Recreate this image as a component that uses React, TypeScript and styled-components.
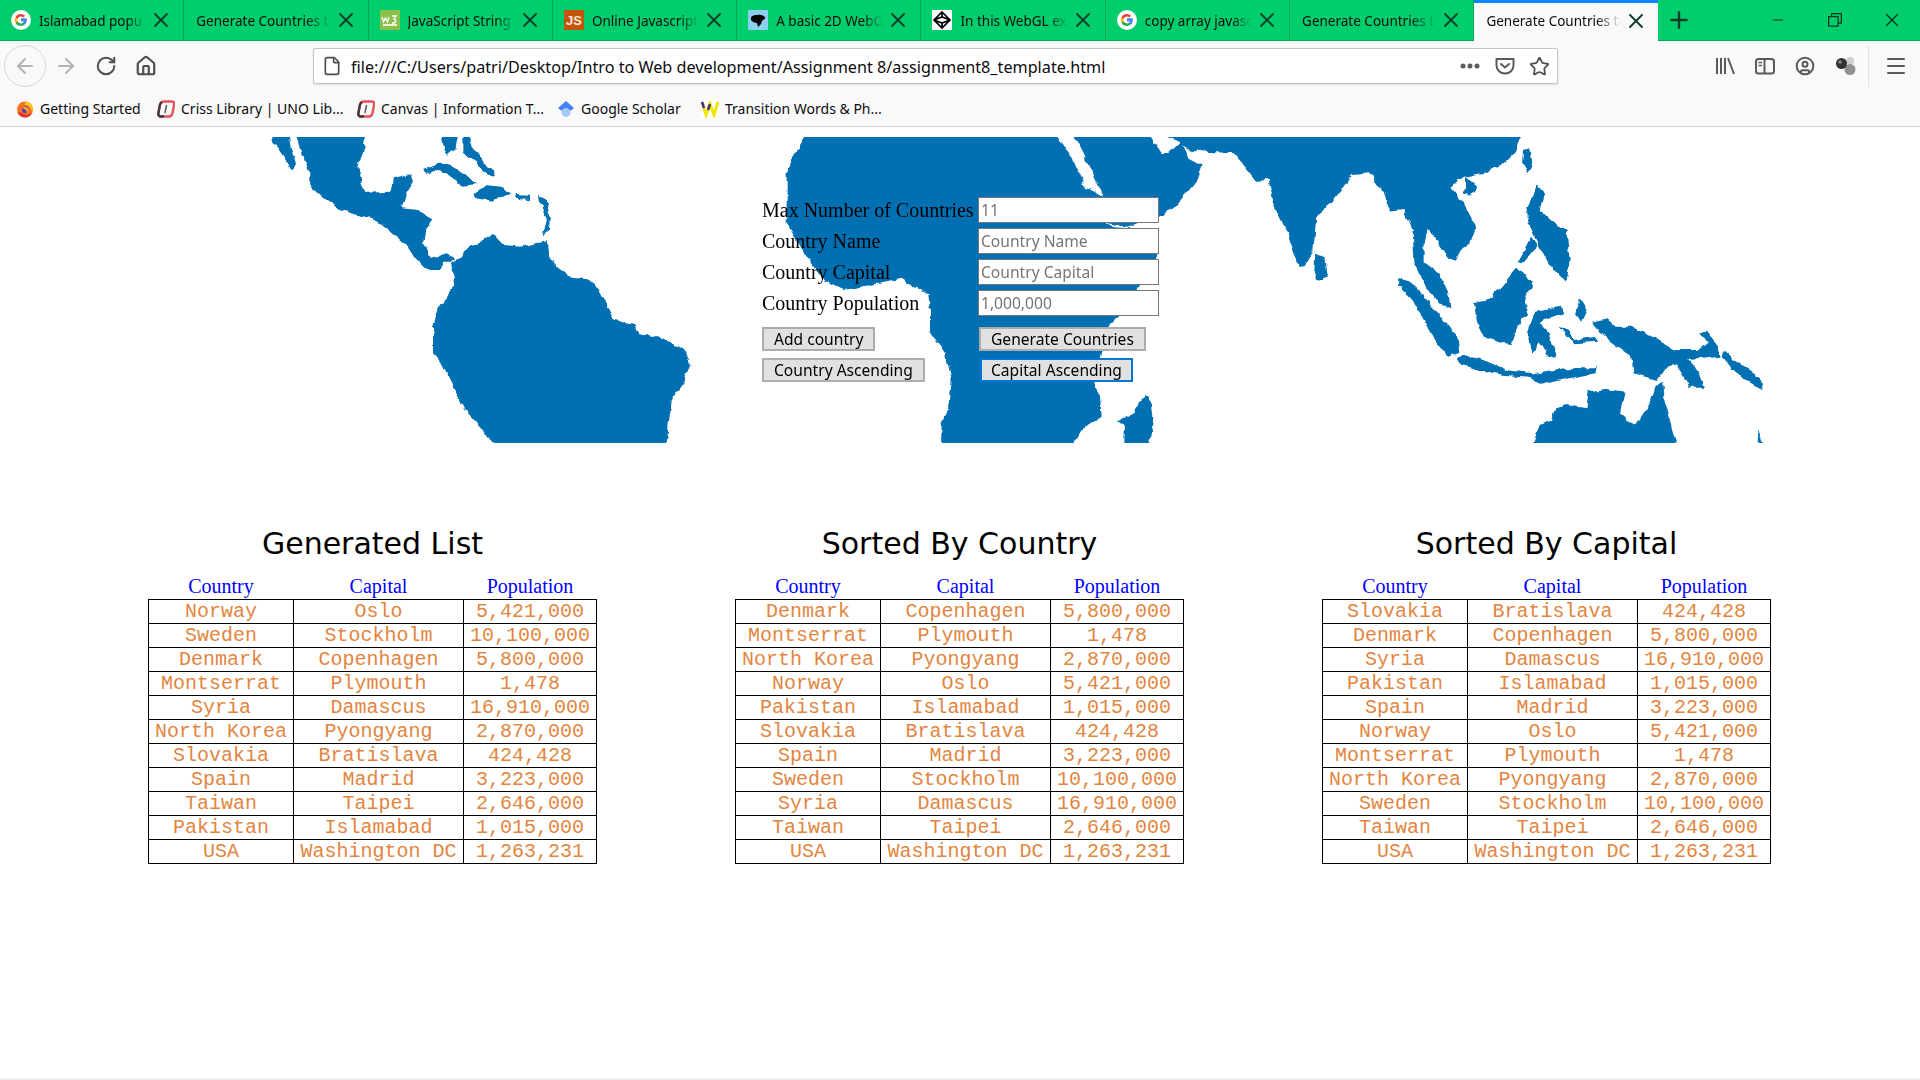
import React from 'react'
import styled, { createGlobalStyle } from 'styled-components'
import { ArrowLeft, ArrowRight, RotateCw, House, File, Star, Menu, CircleUser, Plus, Minus, X } from 'lucide-react'

const UI_FONT = `"Noto Sans", "Open Sans", sans-serif`

const GlobalStyle = createGlobalStyle`
  html, body {
    margin: 0;
    padding: 0;
    background: #fff;
    overflow: hidden;
  }
`

const Page = styled.div`
  display: flex;
  flex-direction: column;
  height: 100vh;
  font-family: ${UI_FONT};
`

/* browser chrome */
const TabStrip = styled.div`
  display: flex;
  height: 40px;
  background: #00cd6c;
  border-bottom: 1px solid #08a458;
  flex-shrink: 0;
`
const Tab = styled.div<{ active?: boolean }>`
  box-sizing: border-box;
  width: ${props => props.active ? '183.6px' : '184.3px'};
  height: ${props => props.active ? '41px' : '40px'};
  display: flex;
  align-items: center;
  padding: ${props => props.active ? '0 0 3px 11px' : '0 0 0 11px'};
  background: ${props => props.active ? '#f9f9fa' : 'transparent'};
  border-top: ${props => props.active ? '3px solid #0a84ff' : 'none'};
  border-right: ${props => props.active ? 'none' : '1px solid #08a458'};
  color: #0c0c0d;
`
const Favicon = styled.svg`
  width: 20px;
  height: 20px;
  margin-right: 8px;
  flex-shrink: 0;
`
const TabTitle = styled.span<{ plain?: boolean }>`
  flex: 1;
  min-width: 0;
  margin-left: ${props => props.plain ? '1px' : '0'};
  padding-top: 1px;
  font-size: 13.5px;
  white-space: nowrap;
  -webkit-mask-image: linear-gradient(to right, #000 82%, transparent 100%);
  mask-image: linear-gradient(to right, #000 82%, transparent 100%);
`
const TabClose = styled.div`
  width: 30px;
  margin-right: 7px;
  display: flex;
  justify-content: center;
  color: #123f2b;
`
const NewTab = styled.div`
  width: 42px;
  display: flex;
  align-items: center;
  justify-content: center;
  color: #0d3d27;
`
const WindowControls = styled.div`
  margin-left: auto;
  display: flex;
  align-items: center;
  height: 40px;
  color: #0d2f20;
`
const WindowButton = styled.div`
  width: 57px;
  display: flex;
  justify-content: center;
`
const Toolbar = styled.div`
  box-sizing: border-box;
  display: flex;
  align-items: center;
  height: 46px;
  padding-top: 4px;
  background: #f9f9fa;
  flex-shrink: 0;
`
const BackButton = styled.div`
  box-sizing: border-box;
  width: 42px;
  height: 42px;
  margin-left: 4px;
  border: 1px solid #d7d7d8;
  border-radius: 50%;
  display: flex;
  align-items: center;
  justify-content: center;
  color: #b4b4b6;
`
const NavButton = styled.div<{ dim?: boolean }>`
  width: 40px;
  display: flex;
  justify-content: center;
  color: ${props => props.dim ? '#b4b4b6' : '#4f4f50'};
`
const UrlBar = styled.div`
  box-sizing: border-box;
  width: 1245px;
  height: 36px;
  margin-left: 147px;
  padding: 0 0 0 8px;
  display: flex;
  align-items: center;
  background: #fff;
  border: 1px solid #c4c4c5;
  border-radius: 2px;
  box-shadow: 0 1px 2px rgba(0, 0, 0, .1);
  color: #4f4f50;
`
const UrlText = styled.span`
  flex: 1;
  margin-left: 9px;
  padding-top: 1px;
  font-size: 16.2px;
  color: #0c0c0d;
  white-space: nowrap;
`
const UrlAction = styled.div`
  width: 35px;
  display: flex;
  justify-content: center;
`
const ToolIcons = styled.div`
  display: flex;
  align-items: center;
  margin-left: 147px;
  color: #5a5a5c;
`
const ToolIcon = styled.div`
  width: 40px;
  display: flex;
  justify-content: center;
`
const ToolDivider = styled.div`
  width: 1px;
  height: 42px;
  margin: 0 7px 0 3px;
  background: #e1e1e2;
`
const Bookmarks = styled.div`
  box-sizing: border-box;
  display: flex;
  align-items: center;
  height: 40px;
  padding: 4px 0 0 16px;
  background: #f9f9fa;
  border-bottom: 1px solid #d3d3d4;
  flex-shrink: 0;
`
const Bookmark = styled.div<{ width: number }>`
  width: ${props => props.width}px;
  display: flex;
  align-items: center;
  font-size: 14px;
  color: #0c0c0d;
  white-space: nowrap;
`
const BookmarkIcon = styled.svg`
  width: 18px;
  height: 18px;
  margin-right: 6px;
  flex-shrink: 0;
`

/* page */
const Hero = styled.section`
  position: relative;
  height: 306px;
  margin-top: 10px;
  flex-shrink: 0;
`
const WorldMap = styled.svg`
  position: absolute;
  top: 0;
  left: 0;
  width: 1920px;
  height: 306px;
`
const Form = styled.div`
  position: relative;
  margin-left: 762px;
  padding-top: 60px;
`
const FieldRow = styled.div`
  display: grid;
  grid-template-columns: 216px 181px;
  align-items: center;
  height: 26px;
  margin-bottom: 5px;
`
const FieldLabel = styled.label`
  padding-top: 1px;
  font-family: "Liberation Serif", serif;
  font-size: 20px;
  color: #000;
  white-space: nowrap;
`
const FieldInput = styled.input`
  box-sizing: border-box;
  width: 181px;
  height: 26px;
  padding: 0 2px;
  background: #fff;
  border: 1px solid #767676;
  font-family: ${UI_FONT};
  font-size: 15.6px;
  &::placeholder {
    color: #757575;
    opacity: 1;
  }
`
const ButtonGroup = styled.div`
  margin-top: 11px;
`
const ButtonRow = styled.div`
  display: grid;
  grid-template-columns: 216px 181px;
  justify-items: start;
  height: 24px;
  margin-bottom: 7px;
`
const ActionButton = styled.button<{ focused?: boolean; inset?: number }>`
  box-sizing: border-box;
  height: 24px;
  margin-left: ${props => props.inset || 0}px;
  padding: 0 ${props => props.focused ? '9px' : '10px'};
  background: #e1e1e1;
  border: 2px solid ${props => props.focused ? '#0078d7' : '#adadad'};
  border-radius: 0;
  font-family: ${UI_FONT};
  font-size: 15.6px;
  line-height: 20px;
  color: #000;
`
const Lists = styled.main`
  display: flex;
  justify-content: center;
  gap: 138px;
  margin-top: 84px;
  padding-right: 1px;
`
const ListSection = styled.section`
  display: flex;
  flex-direction: column;
`
const ListTitle = styled.h2`
  margin: 0 0 14px;
  font-family: "DejaVu Sans", sans-serif;
  font-size: 30px;
  font-weight: 400;
  line-height: 34px;
  text-align: center;
  color: #000;
`
const Table = styled.table`
  border-collapse: collapse;
  width: 448px;
  table-layout: fixed;
`
const HeadCell = styled.th<{ width: number }>`
  width: ${props => props.width}px;
  height: 22px;
  padding: 0 0 2px;
  font-family: "Liberation Serif", serif;
  font-size: 20px;
  line-height: 22px;
  font-weight: 400;
  color: #0000ff;
`
const Cell = styled.td`
  height: 23px;
  padding: 0;
  border: 1px solid #000;
  font-family: "Liberation Mono", monospace;
  font-size: 20px;
  line-height: 23px;
  text-align: center;
  color: #e2853f;
  white-space: nowrap;
`
const BottomEdge = styled.div`
  margin-top: auto;
  height: 2px;
  background: #f0f0f0;
`

const X_ICON = <X size={24} strokeWidth={1.9} />

const GoogleIcon = () => (
  <Favicon viewBox="0 0 20 20">
    <circle cx="10" cy="10" r="10" fill="#fff" />
    <path d="M15.5 8.6H10v2.6h3.2c-.4 1.4-1.6 2.2-3.2 2.2a3.6 3.6 0 0 1-3.4-2.4l-2.2 1.7A6.2 6.2 0 0 0 10 16c3.300 0 5.800-2.400 5.500-7.400z" fill="#34a853" />
    <path d="M15.500 8.600H10v2.600h3.200a3 3 0 0 1-1.200 1.600l2.100 1.600c1.300-1.200 1.800-3.200 1.400-5.800z" fill="#4285f4" />
    <path d="M6.600 11A3.600 3.600 0 0 1 6.600 9L4.400 7.300a6.200 6.200 0 0 0 0 5.400z" fill="#fbbc05" />
    <path d="M10 6.600c.9 0 1.700.3 2.300.9l1.800-1.800A6 6 0 0 0 4.400 7.300L6.600 9A3.600 3.600 0 0 1 10 6.600z" fill="#ea4335" />
  </Favicon>
)
const W3Icon = () => (
  <Favicon viewBox="0 0 20 20">
    <rect width="20" height="20" fill="#8cc04a" />
    <path d="M2 7l1.500 5 2-4 2 4 1.500-5" fill="none" stroke="#fff" strokeWidth="1.300" />
    <path d="M12 6h4l-2 3c2 0 2.500 4-.5 4H12M3 15h14" fill="none" stroke="#fff" strokeWidth="1.300" />
  </Favicon>
)
const JsIcon = () => (
  <Favicon viewBox="0 0 20 20">
    <rect width="20" height="20" fill="#c4540d" />
    <text x="10" y="15" textAnchor="middle" fontFamily="Liberation Sans, sans-serif" fontWeight="700" fontSize="13" fill="#f6e8d8">JS</text>
  </Favicon>
)
const BlobIcon = () => (
  <Favicon viewBox="0 0 20 20">
    <rect width="20" height="20" fill="#8bd0f0" />
    <path d="M3 7c3-3 11-3 14 0 1 2-2 3-3 4l-1 3-3 3-1-4c-2 0-5-1-6-3z" fill="#050505" />
  </Favicon>
)
const CubeIcon = () => (
  <Favicon viewBox="0 0 20 20">
    <rect width="20" height="20" fill="#fff" />
    <path d="M10 2l8 8-8 8-8-8zM10 2v5M10 13v5M2 10l8-3 8 3M2 10l8 3 8-3" fill="none" stroke="#000" strokeWidth="1.700" />
  </Favicon>
)

const tabs = [
  { title: 'Islamabad popu', icon: <GoogleIcon /> },
  { title: 'Generate Countries t' },
  { title: 'JavaScript String', icon: <W3Icon /> },
  { title: 'Online Javascript', icon: <JsIcon /> },
  { title: 'A basic 2D WebG', icon: <BlobIcon /> },
  { title: 'In this WebGL ex', icon: <CubeIcon /> },
  { title: 'copy array javasc', icon: <GoogleIcon /> },
  { title: 'Generate Countries t' },
]

const FirefoxIcon = () => (
  <BookmarkIcon viewBox="0 0 18 18">
    <circle cx="9" cy="9.500" r="8" fill="#f7721f" />
    <path d="M9 1.500c4.400 0 8 3.600 8 8 0 1-.2 2-.6 2.900C15 7 12 5 9 5z" fill="#ffc21f" />
    <path d="M1.600 12.500C3 16 6 17.500 9 17.500c3.500 0 6-2 7-4.500-3 2-6 2-8 1S3.500 11.500 1.600 12.500z" fill="#e3342f" />
    <circle cx="9.500" cy="9.500" r="3.500" fill="#5a3cc4" />
    <path d="M6 8c2-2 6-1.500 7 1.500 0 2-1 3.500-3 4 2-2 0-4-4-5.500z" fill="#f9a11b" />
  </BookmarkIcon>
)
const ULogo = () => (
  <BookmarkIcon viewBox="0 0 18 18">
    <path d="M7 1.500h7.500c2 0 3 1 2.600 3L15.500 13c-.4 2-1.500 3.500-3.500 3.500H4c-2 0-3-1.500-2.600-3.500L3 4.500C3.400 2.500 5 1.500 7 1.500z" fill="none" stroke="#e8505b" strokeWidth="2.400" />
    <path d="M5 2.200C3.800 2.800 3.300 3.500 3 4.500L1.400 13c-.4 2 .6 3.500 2.600 3.500h3" fill="none" stroke="#3d3d40" strokeWidth="2.400" />
    <path d="M9.500 5L8 13" stroke="#55555a" strokeWidth="1.400" />
  </BookmarkIcon>
)
const ScholarIcon = () => (
  <BookmarkIcon viewBox="0 0 18 18">
    <path d="M9 1L1 8h16z" fill="#4285f4" />
    <path d="M1 8h16l-8 6z" fill="#3b78e7" />
    <circle cx="9" cy="12.500" r="4.500" fill="#a9c8fa" />
  </BookmarkIcon>
)
const WIcon = () => (
  <BookmarkIcon viewBox="0 0 18 18">
    <rect width="18" height="18" fill="#fff" />
    <path d="M1 2l4 13 4-11 4 11 4-13" fill="none" stroke="#f2e600" strokeWidth="3" />
    <path d="M1 2l2 6M9 4l-2 6" fill="none" stroke="#3a2e8c" strokeWidth="2.400" />
  </BookmarkIcon>
)

const PocketGlyph = () => (
  <svg width="20" height="20" viewBox="0 0 20 20" fill="none" stroke="#5a5a5c" strokeWidth="2">
    <path d="M1.500 3h17v6.500a8.500 8 0 0 1-17 0z" strokeLinejoin="round" />
    <path d="M6 8l4 3.500L14 8" strokeLinecap="round" />
  </svg>
)
const LibraryGlyph = () => (
  <svg width="20" height="20" viewBox="0 0 20 20" fill="none" stroke="#5a5a5c" strokeWidth="2">
    <path d="M2 2v16M6 2v16M10 2v16M13 2l6 16" />
  </svg>
)
const SidebarGlyph = () => (
  <svg width="20" height="20" viewBox="0 0 20 20" fill="none" stroke="#5a5a5c" strokeWidth="2">
    <rect x="1" y="3" width="18" height="14.500" rx="2.500" />
    <path d="M9.500 3v14.500" />
    <path d="M3.500 6.500h3.500M3.500 9.500h3.500" strokeWidth="1.400" />
  </svg>
)
const ExtensionGlyph = () => (
  <svg width="22" height="22" viewBox="0 0 22 22">
    <circle cx="16" cy="6" r="4" fill="#cfcfd0" />
    <circle cx="16" cy="14.500" r="5.500" fill="#909092" />
    <circle cx="7.500" cy="8.500" r="5.500" fill="#333335" />
    <circle cx="6" cy="7" r="1.800" fill="#8a8a8c" />
  </svg>
)
const RestoreGlyph = () => (
  <svg width="14" height="14" viewBox="0 0 14 14" fill="none" stroke="#0d2f20" strokeWidth="1.200">
    <rect x=".6" y="3.600" width="9.500" height="9.500" />
    <path d="M3.600 3.600V.6h9.800v9.500h-3.300" />
  </svg>
)

const LEFT_LAND = [
  '45,0 85,0 92,60 103,100 92,115 80,90 65,60 50,35',
  '100,0 258,0 255,60 243,110 250,160 262,188 315,185 320,145 365,130 368,150 350,190 340,235 375,240 408,265 395,300 390,340 405,385 440,370 462,385 450,395 430,395 428,420 405,420 385,400 365,375 350,345 300,290 275,265 240,255 205,240 165,205 135,170 135,130 115,70',
  '428,0 468,0 460,55 442,78 435,60',
  '478,0 495,0 492,40 510,70 525,100 550,125 548,140 525,125 505,95 478,70',
  '388,120 430,98 455,115 490,140 510,165 475,170 445,135 415,120 392,130',
  '505,190 525,165 565,170 585,195 550,205 540,215 510,205',
  '595,195 625,197 625,210 597,206',
  '645,195 665,210 672,250 670,300 655,320 665,270 655,225 647,215',
  '470,385 490,350 525,335 545,310 570,345 605,350 625,345 665,330 668,380 690,410 720,440 755,445 780,475 800,525 815,570 860,585 875,610 920,625 975,660 985,700 970,760 945,810 938,880 932,960 558,960 520,900 480,840 460,780 430,700 410,670 410,590 420,540 450,490 458,440 448,400',
]
const MIDDLE_LAND = [
  '150,0 880,0 935,80 975,170 1030,200 1020,270 1060,292 1195,300 1195,375 1140,465 1075,560 1045,590 1030,630 1005,770 1020,800 1025,860 965,900 930,960 543,960 545,880 570,810 575,750 555,670 510,600 510,540 505,490 465,475 420,445 330,465 250,480 190,450 140,380 110,330 80,280 80,130 100,80',
  '935,0 1155,0 1205,72 1225,72 1265,32 1285,85 1325,105 1305,160 1275,195 1240,235 1195,262 1100,290 1040,280 1030,195 1000,130',
  '1160,798 1175,820 1180,860 1165,960 1092,960 1095,890 1070,875 1120,850 1135,815',
]
const RIGHT_LAND = [
  '115,0 945,0 930,65 900,105 860,128 835,135 800,145 788,175 815,220 842,290 830,340 805,365 795,392 783,385 760,340 732,295 725,340 725,395 760,430 780,490 785,535 765,525 730,470 705,405 700,300 680,240 650,245 635,190 605,130 565,135 520,215 485,255 478,360 460,405 445,408 420,310 390,225 378,150 350,152 325,110 300,70 240,65 195,58 178,32',
  '950,60 965,55 968,100 958,130 948,100',
  '820,140 845,170 830,200 815,190 820,165',
  '980,165 995,190 985,240 1010,270 1045,305 1052,390 1045,455 1030,440 1005,400 985,350 960,280 955,230 970,190',
  '965,320 980,345 945,405 935,395 950,360',
  '480,370 505,385 510,440 490,452 478,430',
  '670,445 695,455 720,490 770,570 800,620 805,665 780,680 745,620 700,510 670,470',
  '795,685 815,675 860,690 910,720 970,730 1040,715 1110,715 1115,700 1110,730 1050,745 985,765 960,740 905,735 850,720 810,705',
  '935,415 970,455 950,510 960,550 935,590 920,645 900,640 860,620 845,580 838,520 870,510 900,470',
  '975,545 1035,530 1040,550 1000,565 985,580 1005,610 1025,685 1000,675 985,640 970,670 958,610 965,580',
  '1030,590 1050,600 1060,630 1110,620 1118,635 1060,640 1045,620',
  '1075,505 1090,540 1078,575 1065,550',
  '1105,575 1135,565 1155,590 1190,590 1240,620 1290,660 1340,660 1360,640 1345,610 1360,605 1385,650 1390,680 1320,690 1340,725 1355,770 1320,770 1290,700 1270,710 1250,750 1195,730 1190,680 1160,650 1120,610',
  '1400,660 1420,690 1480,745 1485,780 1440,745 1415,715 1395,680',
  '965,960 985,885 1010,870 1020,835 1045,825 1090,835 1095,780 1115,790 1125,775 1175,785 1165,850 1195,885 1225,840 1245,770 1262,755 1265,820 1280,890 1295,960',
  '1475,900 1490,960 1472,960',
]

// the coastlines are rough in the picture, the filter frays the straight polygon edges
const Map = () => (
  <WorldMap viewBox="0 137 1920 306" fill="#006fb3">
    <defs>
      <filter id="coast" filterUnits="userSpaceOnUse" x="0" y="100" width="1920" height="380">
        <feTurbulence type="fractalNoise" baseFrequency="0.11" numOctaves="2" seed="4" result="noise" />
        <feDisplacementMap in="SourceGraphic" in2="noise" scale="6" xChannelSelector="R" yChannelSelector="G" />
        <feGaussianBlur stdDeviation="0.45" />
      </filter>
    </defs>
    <g filter="url(#coast)">
      <g transform="translate(250 130) scale(.4464 .3333)">
        {LEFT_LAND.map((points, i) => <polygon key={i} points={points} />)}
      </g>
      <g transform="translate(760 130) scale(.3333)">
        {MIDDLE_LAND.map((points, i) => <polygon key={i} points={points} />)}
      </g>
      <g transform="translate(1100 130) scale(.4464 .3333)">
        {RIGHT_LAND.map((points, i) => <polygon key={i} points={points} />)}
      </g>
    </g>
  </WorldMap>
)

type Row = [string, string, string]

const NORWAY: Row = ['Norway', 'Oslo', '5,421,000']
const SWEDEN: Row = ['Sweden', 'Stockholm', '10,100,000']
const DENMARK: Row = ['Denmark', 'Copenhagen', '5,800,000']
const MONTSERRAT: Row = ['Montserrat', 'Plymouth', '1,478']
const SYRIA: Row = ['Syria', 'Damascus', '16,910,000']
const KOREA: Row = ['North Korea', 'Pyongyang', '2,870,000']
const SLOVAKIA: Row = ['Slovakia', 'Bratislava', '424,428']
const SPAIN: Row = ['Spain', 'Madrid', '3,223,000']
const TAIWAN: Row = ['Taiwan', 'Taipei', '2,646,000']
const PAKISTAN: Row = ['Pakistan', 'Islamabad', '1,015,000']
const USA: Row = ['USA', 'Washington DC', '1,263,231']

const lists: { title: string, rows: Row[] }[] = [
  { title: 'Generated List', rows: [NORWAY, SWEDEN, DENMARK, MONTSERRAT, SYRIA, KOREA, SLOVAKIA, SPAIN, TAIWAN, PAKISTAN, USA] },
  { title: 'Sorted By Country', rows: [DENMARK, MONTSERRAT, KOREA, NORWAY, PAKISTAN, SLOVAKIA, SPAIN, SWEDEN, SYRIA, TAIWAN, USA] },
  { title: 'Sorted By Capital', rows: [SLOVAKIA, DENMARK, SYRIA, PAKISTAN, SPAIN, NORWAY, MONTSERRAT, KOREA, SWEDEN, TAIWAN, USA] },
]

const fields = [
  { label: 'Max Number of Countries', placeholder: '11' },
  { label: 'Country Name', placeholder: 'Country Name' },
  { label: 'Country Capital', placeholder: 'Country Capital' },
  { label: 'Country Population', placeholder: '1,000,000' },
]

const App: React.FC = () => {
  return (
    <Page>
      <GlobalStyle />
      <TabStrip>
        {tabs.map((tab, i) => (
          <Tab key={i}>
            {tab.icon}
            <TabTitle plain={!tab.icon}>{tab.title}</TabTitle>
            <TabClose>{X_ICON}</TabClose>
          </Tab>
        ))}
        <Tab active>
          <TabTitle plain>Generate Countries ta</TabTitle>
          <TabClose>{X_ICON}</TabClose>
        </Tab>
        <NewTab><Plus size={26} strokeWidth={2.2} /></NewTab>
        <WindowControls>
          <WindowButton><Minus size={16} strokeWidth={1.5} /></WindowButton>
          <WindowButton><RestoreGlyph /></WindowButton>
          <WindowButton><X size={22} strokeWidth={1.4} /></WindowButton>
        </WindowControls>
      </TabStrip>
      <Toolbar>
        <BackButton><ArrowLeft size={24} strokeWidth={2} /></BackButton>
        <NavButton dim><ArrowRight size={24} strokeWidth={2} /></NavButton>
        <NavButton><RotateCw size={22} strokeWidth={2.2} /></NavButton>
        <NavButton><House size={22} strokeWidth={2.4} /></NavButton>
        <UrlBar>
          <File size={20} strokeWidth={2} />
          <UrlText>file:///C:/Users/patri/Desktop/Intro to Web development/Assignment 8/assignment8_template.html</UrlText>
          <UrlAction><svg width="20" height="6" viewBox="0 0 20 6" fill="#5a5a5c"><circle cx="3" cy="3" r="2.500" /><circle cx="10" cy="3" r="2.500" /><circle cx="17" cy="3" r="2.500" /></svg></UrlAction>
          <UrlAction><PocketGlyph /></UrlAction>
          <UrlAction><Star size={21} strokeWidth={2} /></UrlAction>
        </UrlBar>
        <ToolIcons>
          <ToolIcon><LibraryGlyph /></ToolIcon>
          <ToolIcon><SidebarGlyph /></ToolIcon>
          <ToolIcon><CircleUser size={20} strokeWidth={2.4} /></ToolIcon>
          <ToolIcon><ExtensionGlyph /></ToolIcon>
          <ToolDivider />
          <ToolIcon><Menu size={24} strokeWidth={2} /></ToolIcon>
        </ToolIcons>
      </Toolbar>
      <Bookmarks>
        <Bookmark width={141}><FirefoxIcon />Getting Started</Bookmark>
        <Bookmark width={200}><ULogo />Criss Library | UNO Lib...</Bookmark>
        <Bookmark width={200}><ULogo />Canvas | Information T...</Bookmark>
        <Bookmark width={144}><ScholarIcon />Google Scholar</Bookmark>
        <Bookmark width={200}><WIcon />Transition Words &amp; Ph...</Bookmark>
      </Bookmarks>

      <Hero>
        <Map />
        <Form>
          {fields.map(field => (
            <FieldRow key={field.label}>
              <FieldLabel>{field.label}</FieldLabel>
              <FieldInput placeholder={field.placeholder} />
            </FieldRow>
          ))}
          <ButtonGroup>
            <ButtonRow>
              <ActionButton>Add country</ActionButton>
              <ActionButton inset={1}>Generate Countries</ActionButton>
            </ButtonRow>
            <ButtonRow>
              <ActionButton>Country Ascending</ActionButton>
              <ActionButton focused inset={2}>Capital Ascending</ActionButton>
            </ButtonRow>
          </ButtonGroup>
        </Form>
      </Hero>

      <Lists>
        {lists.map(list => (
          <ListSection key={list.title}>
            <ListTitle>{list.title}</ListTitle>
            <Table>
              <thead>
                <tr>
                  <HeadCell width={145}>Country</HeadCell>
                  <HeadCell width={170}>Capital</HeadCell>
                  <HeadCell width={133}>Population</HeadCell>
                </tr>
              </thead>
              <tbody>
                {list.rows.map(row => (
                  <tr key={row[0]}>
                    {row.map(value => <Cell key={value}>{value}</Cell>)}
                  </tr>
                ))}
              </tbody>
            </Table>
          </ListSection>
        ))}
      </Lists>
      <BottomEdge />
    </Page>
  )
}

export default App
